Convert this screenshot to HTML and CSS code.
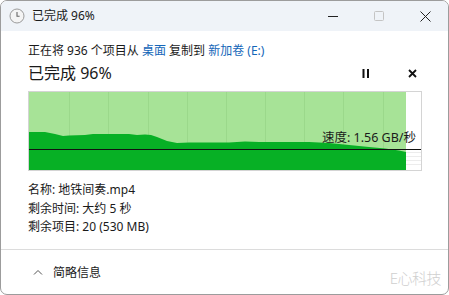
FILE: index.html
```html
<!DOCTYPE html>
<html lang="zh-CN">
<head>
  <meta charset="UTF-8"/>
  <title>已完成 96%</title>
  <link rel="stylesheet" href="styles.css">
</head>
<body>
  <div class="window">

    <!-- Title bar -->
    <div class="titlebar">
      <svg class="app-icon" width="16" height="16" viewBox="0 0 16 16">
        <circle cx="8" cy="8" r="7" fill="#f4f4f4" stroke="#9a9a9a" stroke-width="1"/>
        <path d="M8 4v4.3h2.6" fill="none" stroke="#666" stroke-width="1.1"/>
      </svg>
      <span class="title">已完成 96%</span>
      <div class="spacer"></div>
      <div class="win-btns">
        <span class="wb"><svg width="10" height="10" viewBox="0 0 10 10"><path d="M0 5.5h10" stroke="#222" stroke-width="1"/></svg></span>
        <span class="wb"><svg width="10" height="10" viewBox="0 0 10 10"><rect x="0.5" y="0.5" width="9" height="9" rx="1" fill="none" stroke="#c4c4c4"/></svg></span>
        <span class="wb"><svg width="11" height="11" viewBox="0 0 11 11"><path d="M0.5 0.5l10 10M10.5 0.5l-10 10" stroke="#222" stroke-width="1"/></svg></span>
      </div>
    </div>

    <!-- Body -->
    <div class="content">
      <div class="from">正在将 936 个项目从 <a href="#">桌面</a> 复制到 <a href="#">新加卷 (E:)</a></div>

      <div class="status">
        <span class="pct">已完成 96%</span>
        <div class="spacer"></div>
        <span class="ctl"><svg width="8" height="9" viewBox="0 0 8 9"><rect x="0.5" y="0" width="2" height="9" fill="#111"/><rect x="5" y="0" width="2" height="9" fill="#111"/></svg></span>
        <span class="ctl"><svg width="9" height="9" viewBox="0 0 9 9"><path d="M1 1l7 7M8 1l-7 7" stroke="#111" stroke-width="1.8"/></svg></span>
      </div>

      <div class="chart">
        <svg width="392" height="78" viewBox="0 0 392 78">
          <rect x="0" y="0" width="377" height="78" fill="#a7e397"/>
          <g stroke="#9bd88b" stroke-width="1">
            <path d="M40.5 0v78M79.5 0v78M119.5 0v78M158.5 0v78M197.5 0v78M236.5 0v78M275.5 0v78M314.5 0v78M354.5 0v78"/>
          </g>
          <g stroke="#ececec" stroke-width="1">
            <path d="M377 60.5h15M377 64.5h15M377 68.5h15M377 72.5h15"/>
          </g>
          <path fill="#07b025" d="M0 40 L16 40 L26 42 L34 44 L40 43.5 L56 43 L64 42 L100 42 L108 43 L116 42.5 L122 43 L128 45 L138 49 L148 51 L160 50.5 L200 50.5 L216 49.5 L230 50 L280 50 L300 51 L320 53 L340 55 L356 56.5 L370 58.5 L377 60 L377 78 L0 78 Z"/>
          <path d="M0 57.5h392" stroke="#111" stroke-width="1.2"/>
        </svg>
        <span class="speed">速度: 1.56 GB/秒</span>
      </div>

      <div class="details">
        <div>名称: 地铁间奏.mp4</div>
        <div>剩余时间: 大约 5 秒</div>
        <div>剩余项目: 20 (530 MB)</div>
      </div>
    </div>

    <!-- Footer -->
    <div class="footer">
      <svg class="chev" width="10" height="6" viewBox="0 0 10 6"><path d="M1 5.5L5 1.5l4 4" fill="none" stroke="#555" stroke-width="1"/></svg>
      <span>简略信息</span>
      <div class="spacer"></div>
      <span class="mark">E心科技</span>
    </div>
  </div>
</body>
</html>
```

FILE: styles.css
```css
* { margin:0; padding:0; box-sizing:border-box }
body {
  font-family:"Noto Sans","Noto Sans CJK SC",sans-serif;
  color:#1a1a1a;
  background:#fff;
}
a { text-decoration:none; color:#1466b8 }
.spacer { flex:1 }

/* Window frame */
.window {
  width:449px; height:295px;
  border:1px solid #9c9c9c; border-radius:7px;
  overflow:hidden;
  display:flex; flex-direction:column;
  background:#fff;
}

/* Title bar */
.titlebar {
  height:30px; flex:none;
  background:#eff3f8;
  display:flex; align-items:center;
  padding-left:8px;
}
.app-icon { margin-right:7px }
.title { font-size:12px; line-height:16px }
.win-btns { display:flex; height:100% }
.wb {
  width:46px; height:100%;
  display:flex; align-items:center; justify-content:center;
}

/* Content */
.content { padding:0 0 0 27px; flex:1 }
.from {
  font-size:12px; line-height:18px;
  margin-top:11px;
}
.status {
  display:flex; align-items:center;
  height:22px; margin-top:2px;
  padding-right:13px;
}
.pct { font-size:16px; line-height:22px }
.ctl {
  width:46px; height:22px;
  display:flex; align-items:center; justify-content:center;
}
.chart {
  position:relative;
  width:394px; height:80px;
  margin-top:7px;
  border:1px solid #d4d4d4;
}
.chart svg { display:block }
.speed {
  position:absolute; right:5px; top:38px;
  font-size:12.5px; line-height:16px;
}
.details {
  margin-top:10px;
  font-size:12px; line-height:18.5px;
}

/* Footer */
.footer {
  height:45px; flex:none;
  border-top:1px solid #dcdcdc;
  display:flex; align-items:center;
  padding:0 7px 0 32px;
  font-size:12px;
}
.chev { margin-right:10px }
.mark {
  color:#cfcfcf; font-size:15px; font-weight:300;
  margin-top:10px; letter-spacing:-0.5px;
}
```
